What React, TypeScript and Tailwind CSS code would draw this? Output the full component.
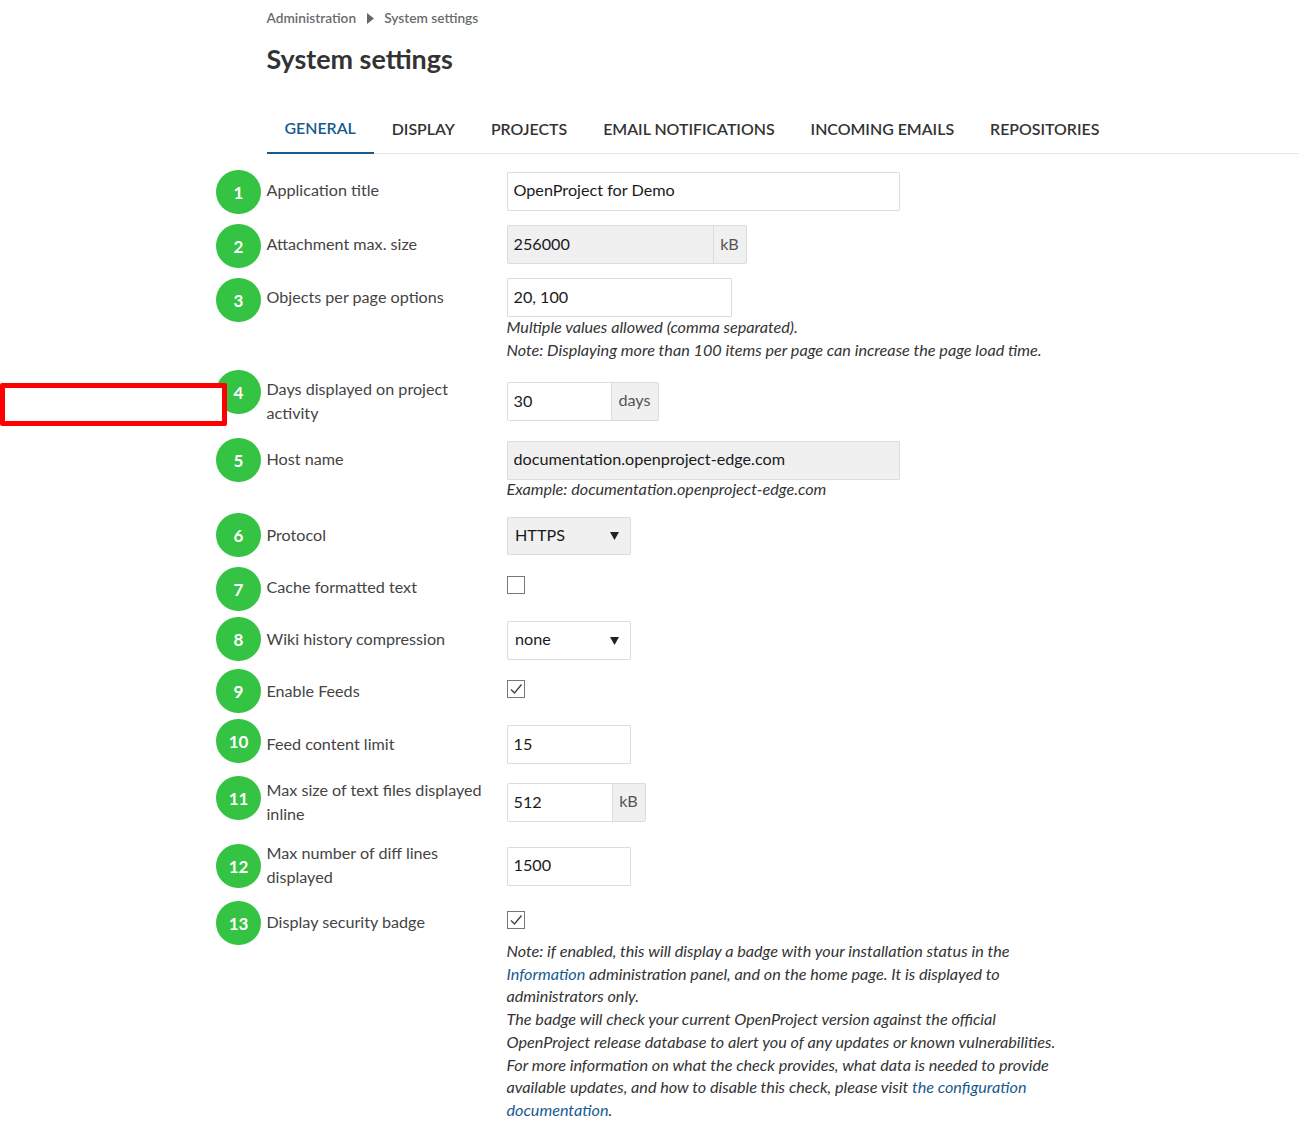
const Badge = ({ n, className }: { n: number; className: string }) => (
  <div
    className={`absolute left-[-50.5px] flex h-[44px] w-[45px] items-center justify-center rounded-full bg-[#35c343] pt-[2px] text-[17px] font-bold text-white ${className}`}
  >
    {n}
  </div>
);

const Input = ({
  value,
  width,
  disabled,
  joined,
  pad = "pb-[2px]",
}: {
  value: string;
  width: string;
  disabled?: boolean;
  joined?: boolean;
  pad?: string;
}) => (
  <input
    readOnly
    defaultValue={value}
    className={`h-[39px] border border-[#dcdcdc] px-[6px] text-[16.2px] text-[#1a1a1a] outline-none ${pad} ${width} ${disabled ? "bg-[#f0f0f0]" : "bg-white"} ${joined ? "rounded-l-[2px]" : "rounded-[1px]"}`}
  />
);

const Unit = ({ text, width }: { text: string; width: string }) => (
  <span
    className={`-ml-px flex h-[39px] items-center justify-center rounded-r-[2px] border border-[#dcdcdc] bg-[#f0f0f0] pb-[1px] text-[16.2px] text-[#555] ${width}`}
  >
    {text}
  </span>
);

const Select = ({ value, disabled }: { value: string; disabled?: boolean }) => (
  <div
    className={`flex w-[124px] items-center justify-between rounded-[2px] border border-[#dcdcdc] pb-[2px] pl-[7.5px] pr-[11px] text-[16.2px] text-[#1a1a1a] ${disabled ? "h-[38px] bg-[#f0f0f0]" : "h-[39px] bg-white"}`}
  >
    {value}
    <svg width="9" height="8" viewBox="0 0 9 8" className="mt-[2px]">
      <path d="M0 0h9L4.5 8z" fill="#222" />
    </svg>
  </div>
);

const Checkbox = ({ checked }: { checked?: boolean }) => (
  <span className="mb-[4px] flex h-[18px] w-[18px] items-center justify-center border border-[#777] bg-white">
    {checked && (
      <svg width="14" height="12" viewBox="0 0 14 12" fill="none">
        <path d="M2 6.5L5.5 10L12.5 1.5" stroke="#444" strokeWidth="1.4" />
      </svg>
    )}
  </span>
);

const Row = ({
  label,
  n,
  badge,
  className = "",
  labelClass = "",
  children,
}: {
  label: string;
  n: number;
  badge: string;
  className?: string;
  labelClass?: string;
  children: React.ReactNode;
}) => (
  <div className={`relative flex items-center ${className}`}>
    <Badge n={n} className={badge} />
    <label className={`w-[240px] shrink-0 pr-[16px] text-[16.15px] leading-[24px] text-[#444] ${labelClass}`}>
      {label}
    </label>
    <div className="flex items-center">{children}</div>
  </div>
);

const Hint = ({ className = "", children }: { className?: string; children: React.ReactNode }) => (
  <div className={`ml-[240px] text-[16.2px] italic text-[#333] ${className}`}>{children}</div>
);

const tabs = ["GENERAL", "DISPLAY", "PROJECTS", "EMAIL NOTIFICATIONS", "INCOMING EMAILS", "REPOSITORIES"];

export default function App() {
  return (
    <div className="relative h-[1125px] overflow-hidden bg-white pl-[266.5px] font-['Lato',sans-serif]">
      {/* breadcrumb */}
      <div className="flex h-[36px] items-center gap-[10.5px] text-[13.7px] font-semibold text-[#6b6b6b]">
        <span>Administration</span>
        <svg width="7" height="11" viewBox="0 0 7 11">
          <path d="M0 0l7 5.5L0 11z" fill="#666" />
        </svg>
        <span>System settings</span>
      </div>
      <h1 className="mt-[3px] text-[26.9px] font-bold leading-[40px] text-[#333]">System settings</h1>

      <div className="mt-[27px] flex h-[48px] border-b border-[#e7e7e7]">
        {tabs.map((tab, i) => (
          <div
            key={tab}
            className={`flex h-[48px] items-center px-[18px] pb-[2px] text-[15.9px] font-semibold ${i === 0 ? "border-b-2 border-[#175a8e] text-[#175a8e]" : "text-[#333]"}`}
          >
            {tab}
          </div>
        ))}
      </div>

      <div className="pt-[18px]">
        <Row n={1} label="Application title" badge="top-[-2px]" labelClass="pb-[3px]">
          <Input value="OpenProject for Demo" width="w-[393px]" pad="pb-[4px]" />
        </Row>
        <Row n={2} label="Attachment max. size" badge="top-[-1px]" className="mt-[14px]" labelClass="pb-[2px]">
          <Input value="256000" width="w-[207px]" disabled joined />
          <Unit text="kB" width="w-[34px]" />
        </Row>
        <Row n={3} label="Objects per page options" badge="top-0" className="mt-[14px]" labelClass="pb-[2px]">
          <Input value="20, 100" width="w-[225px]" />
        </Row>
        <Hint className="-mt-[2px] leading-[23px]">
          Multiple values allowed (comma separated).
          <br />
          Note: Displaying more than 100 items per page can increase the page load time.
        </Hint>
        <Row n={4} label="Days displayed on project activity" badge="top-[-7px]" className="mt-[16px] h-[48px]">
          <Input value="30" width="w-[105px]" joined />
          <Unit text="days" width="w-[48px]" />
        </Row>
        <Row n={5} label="Host name" badge="top-[-3px]" className="mt-[16px]" labelClass="pb-[3px]">
          <Input value="documentation.openproject-edge.com" width="w-[393px]" disabled pad="pb-[4px]" />
        </Row>
        <Hint className="-mt-[3px] leading-[23px]">Example: documentation.openproject-edge.com</Hint>
        <Row n={6} label="Protocol" badge="top-[-4px]" className="mt-[17px]" labelClass="pb-[2px]">
          <Select value="HTTPS" disabled />
        </Row>
        <Row n={7} label="Cache formatted text" badge="top-[-8px]" className="mt-[20px]">
          <Checkbox />
        </Row>
        <Row n={8} label="Wiki history compression" badge="top-[-4px]" className="mt-[22px]" labelClass="pb-[3px]">
          <Select value="none" />
        </Row>
        <Row n={9} label="Enable Feeds" badge="top-[-10px]" className="mt-[19px]">
          <Checkbox checked />
        </Row>
        <Row n={10} label="Feed content limit" badge="top-[-6px]" className="mt-[22px]" labelClass="pb-[2px]">
          <Input value="15" width="w-[124px]" />
        </Row>
        <Row n={11} label="Max size of text files displayed inline" badge="top-[-2px]" className="mt-[14px]">
          <Input value="512" width="w-[106px]" joined />
          <Unit text="kB" width="w-[34px]" />
        </Row>
        <Row n={12} label="Max number of diff lines displayed" badge="top-[3px]" className="mt-[15px]" labelClass="pb-[2px]">
          <Input value="1500" width="w-[124px]" pad="pb-[4px]" />
        </Row>
        <Row n={13} label="Display security badge" badge="top-[-9px]" className="mt-[19px]">
          <Checkbox checked />
        </Row>
        <Hint className="mt-[6px] w-[552px] leading-[22.7px]">
          Note: if enabled, this will display a badge with your installation status in the{" "}
          <a className="text-[#175a8e]">Information</a> administration panel, and on the home page. It is displayed to
          administrators only.
          <br />
          The badge will check your current OpenProject version against the official OpenProject release database to
          alert you of any updates or known vulnerabilities.
          <br />
          For more information on what the check provides, what data is needed to provide available updates, and how to
          disable this check, please visit <a className="text-[#175a8e]">the configuration documentation</a>.
        </Hint>
      </div>

      {/* annotation box over the page */}
      <div className="absolute left-0 top-[383px] h-[43px] w-[227px] rounded-[2px] border-[5px] border-[#ff0000] bg-white" />
    </div>
  );
}
